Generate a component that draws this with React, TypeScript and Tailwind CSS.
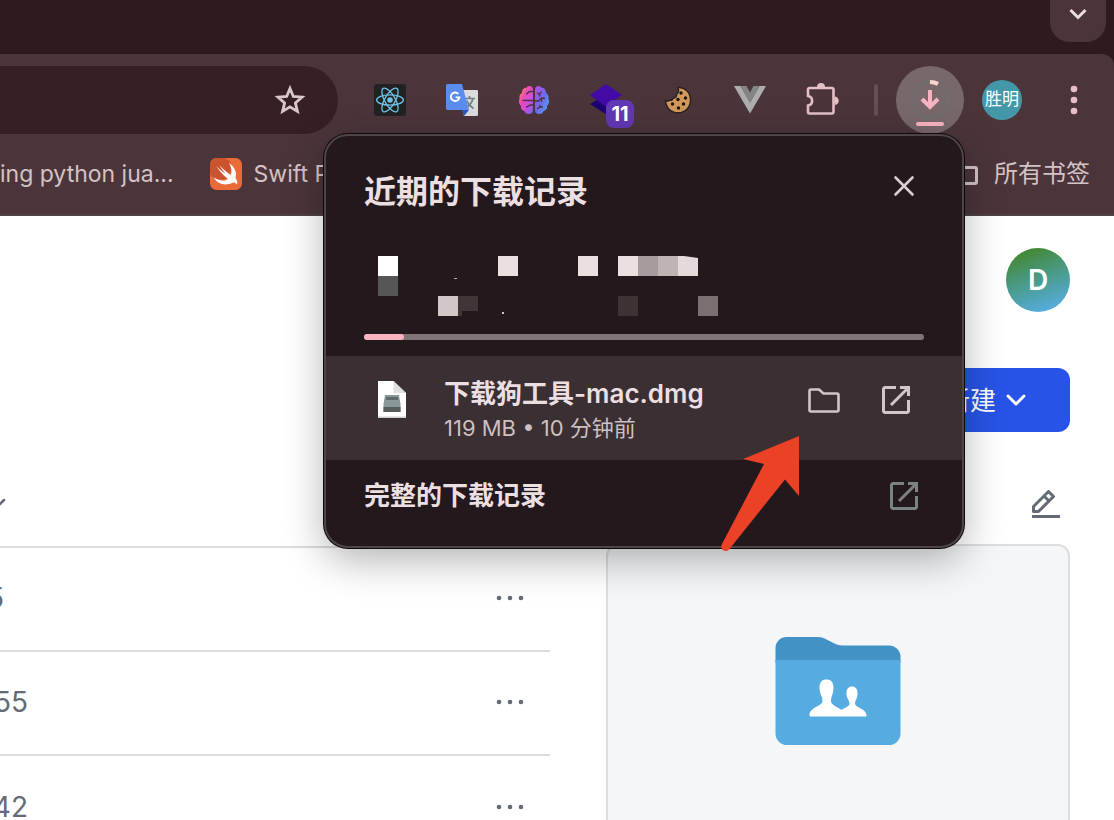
import { ReactNode } from "react"


const rows = [
    { id: 1, time: "5", width: "w-1" },
    { id: 2, time: "55", width: "w-7" },
    { id: 3, time: "42", width: "w-7" },
]

// redacted download entry, 20px blocks
const blocks = [
    { x: 14, y: 0, w: 20, h: 20, fill: "#ffffff" },
    { x: 14, y: 20, w: 20, h: 20, fill: "#565656" },
    { x: 134, y: 0, w: 20, h: 20, fill: "#ebdfe0" },
    { x: 214, y: 0, w: 20, h: 20, fill: "#ebdfe0" },
    { x: 254, y: 0, w: 20, h: 20, fill: "#ebdfe0" },
    { x: 274, y: 0, w: 20, h: 20, fill: "#a79c9d" },
    { x: 294, y: 0, w: 20, h: 20, fill: "#bfb3b4" },
    { x: 74, y: 40, w: 20, h: 20, fill: "#d2c6c7" },
    { x: 94, y: 40, w: 20, h: 15, fill: "#403637" },
    { x: 94, y: 55, w: 4, h: 5, fill: "#403637" },
    { x: 254, y: 40, w: 20, h: 20, fill: "#3d3234" },
    { x: 334, y: 40, w: 20, h: 20, fill: "#7b7071" },
    { x: 90, y: 22, w: 3, h: 1, fill: "#b5a9ab" },
    { x: 138, y: 56, w: 2, h: 2, fill: "#d2c6c7" },
]

function ReactIcon() {
    return (
        <svg viewBox="0 0 32 32" className="w-8 h-8">
            <rect width="32" height="32" rx="3" fill="#222222" />
            <g fill="none" stroke="#6fc3e6" strokeWidth="1.3">
                <ellipse cx="16" cy="16" rx="13.4" ry="5.2" />
                <ellipse cx="16" cy="16" rx="13.4" ry="5.2" transform="rotate(60 16 16)" />
                <ellipse cx="16" cy="16" rx="13.4" ry="5.2" transform="rotate(120 16 16)" />
            </g>
            <circle cx="16" cy="16" r="2.8" fill="#6fc3e6" />
        </svg>
    )
}

function TranslateIcon() {
    return (
        <svg viewBox="0 0 32 32" className="w-8 h-8">
            <path d="M12 6h19a1 1 0 0 1 1 1v23.500a1.500 1.500 0 0 1-1.500 1.500H18z" fill="#dcdcdc" />
            <path d="M16 26h7l-5 6z" fill="#2f56c0" />
            <path d="M18 14.500h11M23.500 12v2.500M27 14.500c-1 4-4 7.500-7.500 10M20.500 16.500c1.500 3.500 4 6 7 8" fill="none" stroke="#6f8088" strokeWidth="1.700" />
            <path d="M1.500 0H16l7 26H1.500A1.500 1.500 0 0 1 0 24.500v-23A1.500 1.500 0 0 1 1.500 0z" fill="#5b8def" />
            <path d="M12.300 9.800A4.300 4.300 0 1 0 13.400 13.400H9.600" fill="none" stroke="#ffffff" strokeWidth="1.900" />
        </svg>
    )
}

function BrainIcon() {
    return (
        <svg viewBox="0 0 32 32" className="w-8 h-8">
            <defs>
                <linearGradient id="brainLeft" x1="0" y1="0" x2="0.9" y2="1">
                    <stop offset="0" stopColor="#f9c03a" />
                    <stop offset="0.35" stopColor="#ee4fae" />
                    <stop offset="0.65" stopColor="#d44be0" />
                    <stop offset="1" stopColor="#7a63f0" />
                </linearGradient>
                <linearGradient id="brainRight" x1="0" y1="0" x2="1" y2="1">
                    <stop offset="0" stopColor="#c04be8" />
                    <stop offset="0.5" stopColor="#6c68f4" />
                    <stop offset="1" stopColor="#48b4f2" />
                </linearGradient>
            </defs>
            <path d="M11 2c2.500-.3 4 1.500 4 4v20c0 2.500-1.500 4-4 4-2.500 0-4-1-4.600-3C3.500 26.500 2.500 24 3 22 .8 20 .4 17 1.600 14.500 1 12 2 10 4 9 4 5.500 6 3.500 8.500 3.800 9 2.800 10 2.100 11 2z" fill="url(#brainLeft)" />
            <path d="M21 2c-2.500-.3-4 1.500-4 4v20c0 2.500 1.500 4 4 4 2.500 0 4-1 4.600-3 2.900-.5 3.900-3 3.400-5 2.200-2 2.600-5 1.400-7.500.6-2.500-.4-4.500-2.400-5.500 0-3.500-2-5.500-4.500-5.200-.5-1-1.500-1.700-2.500-1.800z" fill="url(#brainRight)" />
            <path d="M15 7.500h-3c-2 0-2 2.500-4 2.500M15 16.500H4.500M8 23c3 0 3-2 4.500-2H15M19 8.500l2.500 2 2-3M21.500 10.500v2M17 17h3.500l3-3 3.500.5M23.500 14v4M19 25l3-2v-2M22 23h3" fill="none" stroke="#4b353a" strokeWidth="1.300" />
        </svg>
    )
}

function StackIcon() {
    return (
        <div className="relative w-8 h-8">
            <svg viewBox="0 0 32 32" className="w-8 h-8">
                <path d="M0 20l16-9 16 9-16 10z" fill="#1d0070" />
                <path d="M0 11L16 0l16 11-16 12z" fill="#430aa5" />
            </svg>
            <span className="absolute left-4 top-4 w-7 h-7 rounded-lg bg-[#6338b4] text-white text-xl font-bold flex items-center justify-center">11</span>
        </div>
    )
}

function CookieIcon() {
    return (
        <svg viewBox="0 0 32 32" className="w-8 h-8">
            <path d="M16 3.500C23 3 28.500 8.500 28.500 16S23 28.800 16 28.800 4 24 3.500 16.500c2 .8 3.500.5 4.500-.5 1.500.5 3-.5 3.200-2 2.300 0 3.800-1.500 3.300-3.500 1.800-1.500 2.500-4 1.500-7z" fill="#d2985a" stroke="#2b2320" strokeWidth="1.500" />
            <g fill="#1c1310">
                <circle cx="19" cy="9" r="1.700" />
                <circle cx="23.500" cy="14" r="1.700" />
                <circle cx="16" cy="15.500" r="1.700" />
                <circle cx="10.500" cy="20" r="1.700" />
                <circle cx="21.500" cy="20" r="1.700" />
                <circle cx="16.500" cy="24" r="1.700" />
            </g>
        </svg>
    )
}

function VueIcon() {
    return (
        <svg viewBox="0 0 32 32" className="w-8 h-8">
            <path d="M0 2h6.500L16 18.500 25.500 2H32L16 29.500z" fill="#adadad" />
            <path d="M6.500 2h6L16 8.500 19.500 2h6L16 18.500z" fill="#858585" />
        </svg>
    )
}

function PuzzleIcon() {
    return (
        <svg viewBox="0 0 36 36" className="w-9 h-9">
            <path d="M5.500 6H28a1.500 1.500 0 0 1 1.500 1.500V30a1.500 1.500 0 0 1-1.500 1.500H5.500A1.500 1.500 0 0 1 4 30v-6.500a4.800 4.800 0 0 0 0-9.500V7.500A1.500 1.500 0 0 1 5.500 6z" fill="none" stroke="#e3bfc6" strokeWidth="2.600" />
            <path d="M13 5a4 4 0 0 1 8 0zM30.500 14.500a4 4 0 0 1 0 8.500z" fill="#e3bfc6" />
        </svg>
    )
}

function SwiftIcon() {
    return (
        <svg viewBox="0 0 32 32" className="w-8 h-8 shrink-0">
            <rect width="32" height="32" rx="6.500" fill="#ea6a38" />
            <path d="M6.500 0H15c5 3 7 6 7.500 10L16 21C9 23 3 21 0 16V6.500A6.500 6.500 0 0 1 6.500 0z" fill="#cb532d" />
            <path d="M19 5c6 4 8 10 6.500 15 2.200 3 2 5 1.500 6.500-2-2.500-4-2-5-1.500C14 28.500 6.500 25 4 19.500c5 3.500 10.500 4 14 1.500C13 17 9 12.500 6 8c3.500 3.500 7 6 9.500 7.500C13 13 11 10 9.500 7.500 13 11 17.500 15 21 17c1-4 .5-8-2-12z" fill="#ffffff" />
        </svg>
    )
}

function OpenIcon({ color }: { color: string }) {
    return (
        <svg viewBox="0 0 28 28" className={`w-7 h-7 ${color}`} fill="none" stroke="currentColor" strokeWidth="3">
            <path d="M14 1.500H3A1.500 1.500 0 0 0 1.500 3v22A1.500 1.500 0 0 0 3 26.500h22a1.500 1.500 0 0 0 1.500-1.500V14" />
            <path d="M18 1.500h8.500V10M26 2L9 19" />
        </svg>
    )
}

function Dots() {
    return (
        <svg viewBox="0 0 28 6" className="w-7 h-1.5" fill="#646b75">
            <circle cx="3" cy="3" r="2.300" />
            <circle cx="14" cy="3" r="2.300" />
            <circle cx="25" cy="3" r="2.300" />
        </svg>
    )
}

function Extension({ label, children }: { label: string, children: ReactNode }) {
    return (
        <button aria-label={label} className="w-[72px] h-[68px] flex items-center justify-center">
            {children}
        </button>
    )
}

function Toolbar() {
    return (
        <div className="flex items-center pt-3">
            <div className="flex-1 min-w-0 h-[68px] rounded-r-full bg-[#362024] flex items-center pr-8">
                <input type="text" aria-label="地址栏" className="flex-1 min-w-0 h-full bg-transparent outline-none text-2xl text-[#ecdfe1]" />
                <button aria-label="收藏">
                    <svg viewBox="0 0 32 32" className="w-8 h-8" fill="none" stroke="#d8c8cb" strokeWidth="2.800">
                        <path d="M16 4.500l3.300 8 8.700.7-6.600 5.700 2 8.500L16 22.900l-7.400 4.500 2-8.500L4 13.200l8.700-.7z" />
                    </svg>
                </button>
            </div>
            <div className="flex items-center shrink-0 pl-4">
                <Extension label="React"><ReactIcon /></Extension>
                <Extension label="Google 翻译"><TranslateIcon /></Extension>
                <Extension label="Brain"><BrainIcon /></Extension>
                <Extension label="Stack"><StackIcon /></Extension>
                <Extension label="Cookie"><CookieIcon /></Extension>
                <Extension label="Vue"><VueIcon /></Extension>
                <Extension label="扩展程序"><PuzzleIcon /></Extension>
            </div>
            <div className="ml-4 w-1 h-8 shrink-0 rounded-full bg-[#674e54]" />
            <button aria-label="下载" className="ml-[18px] w-[68px] h-[68px] shrink-0 rounded-full bg-[#78676b]">
                <svg viewBox="0 0 68 68" className="w-full h-full" fill="none">
                    <circle cx="34" cy="34" r="18" stroke="#726c6b" strokeWidth="4" />
                    <path d="M34 16a18 18 0 0 1 8 1.900" stroke="#fcd6cc" strokeWidth="4" />
                    <path d="M34 24v17M26 33l8 8 8-8" stroke="#f8b2c0" strokeWidth="4" />
                    <path d="M22 58h24" stroke="#f8b2c0" strokeWidth="4" strokeLinecap="round" />
                </svg>
            </button>
            <button className="ml-[18px] w-10 h-10 shrink-0 rounded-full bg-[#4497a9] text-white text-[17px] whitespace-nowrap flex items-center justify-center">胜明</button>
            <button aria-label="菜单" className="ml-8 mr-5 w-10 h-10 shrink-0 flex items-center justify-center">
                <svg viewBox="0 0 8 32" className="w-2 h-8" fill="#e6c0c8">
                    <circle cx="4" cy="5" r="3.300" />
                    <circle cx="4" cy="16" r="3.300" />
                    <circle cx="4" cy="27" r="3.300" />
                </svg>
            </button>
        </div>
    )
}

function Bookmarks() {
    return (
        <nav className="flex items-center justify-between h-20 pr-6 text-2xl text-[#d3c3c6] whitespace-nowrap">
            <div className="flex items-center gap-9 text-[23px]">
                <a href="#python">ing python jua...</a>
                <a href="#swift" className="flex items-center gap-3"><SwiftIcon />Swift P</a>
            </div>
            <a href="#all" className="flex items-center gap-4">
                <svg viewBox="0 0 32 24" className="w-8 h-6" fill="none" stroke="currentColor" strokeWidth="3">
                    <path d="M1.500 20V3.500h10l3 2H29A1.500 1.500 0 0 1 30.500 7v13a1.500 1.500 0 0 1-1.500 1.500H3A1.500 1.500 0 0 1 1.500 20z" />
                </svg>
                所有书签
            </a>
        </nav>
    )
}

function Downloads() {
    return (
        <section className="absolute right-[150px] top-[134px] w-[640px] rounded-3xl border-2 border-[#4d4547] bg-[#23191c] text-[#ecdfe1] shadow-[0_0_0_1px_#0d0809,0_12px_40px_rgba(0,0,0,0.3)]">
            <div className="px-[38px]">
                <div className="flex items-center justify-between h-[108px] pr-2">
                    <h2 className="pt-1 text-[32px] font-semibold leading-10">近期的下载记录</h2>
                    <button aria-label="关闭" className="pb-2">
                        <svg viewBox="0 0 24 24" className="w-6 h-6" fill="none" stroke="#dccdd0" strokeWidth="2.600" strokeLinecap="round">
                            <path d="M3.500 3.500l17 17M20.500 3.500l-17 17" />
                        </svg>
                    </button>
                </div>
                <svg viewBox="0 0 560 78" className="mt-3 w-[560px] h-[78px]">
                    {blocks.map((b) => (
                        <rect key={`${b.x}-${b.y}`} x={b.x} y={b.y} width={b.w} height={b.h} fill={b.fill} />
                    ))}
                    <path d="M314 0h6l14 2v18h-20z" fill="#e5d9da" />
                </svg>
                <div className="h-1.5 mb-4 rounded-full bg-[#7f7476]">
                    <div className="h-full w-10 rounded-full bg-[#f8b2c0]" />
                </div>
            </div>
            <div className="flex items-start h-[104px] pt-5 px-[52px] bg-[#3a2f32]">
                <svg viewBox="0 0 28 40" className="mt-1 w-7 h-10">
                    <path d="M0 1h15.500L28 13v25H0z" fill="#ffffff" />
                    <path d="M15.500 1v12H28z" fill="#dfdfdf" />
                    <path d="M0 36.500h28V38H0z" fill="#cfcfcf" />
                    <path d="M7 15h14l1.500 9v8h-17v-8z" fill="#8b9899" />
                    <path d="M8 17h12v3H8z" fill="#5d6a6c" />
                    <path d="M5.500 27h17v5h-17z" fill="#565b5c" />
                </svg>
                <div className="flex-1 pl-[38px]">
                    <p className="text-[26px] leading-9 font-semibold">下载狗工具-mac.dmg</p>
                    <p className="text-[22px] leading-8 text-[#cdbfc2]">119 MB • 10 分钟前</p>
                </div>
                <div className="flex items-center h-12 gap-[42px]">
                    <button aria-label="在文件夹中显示">
                        <svg viewBox="0 0 32 28" className="w-8 h-7" fill="none" stroke="#d3c5c8" strokeWidth="2.600">
                            <path d="M3 3.500h8l4.500 4H29A1.500 1.500 0 0 1 30.500 9v15a1.500 1.500 0 0 1-1.500 1.500H3A1.500 1.500 0 0 1 1.500 24V5A1.500 1.500 0 0 1 3 3.500z" />
                        </svg>
                    </button>
                    <button aria-label="打开文件"><OpenIcon color="text-[#d3c5c8]" /></button>
                </div>
            </div>
            <a href="#downloads" className="flex items-center justify-between h-[86px] pl-[38px] pr-11 pb-3.5">
                <span className="text-[26px] leading-9 font-semibold">完整的下载记录</span>
                <OpenIcon color="text-[#7d8285]" />
            </a>
        </section>
    )
}

function SharedFolder() {
    return (
        <svg viewBox="0 0 126 110" className="w-[126px] h-[110px]">
            <path d="M11.500 1h31C52 1 58 9.500 68 9.500h46A11.500 11.500 0 0 1 125.500 21v6H.5V12A11 11 0 0 1 11.500 1z" fill="#4392c5" />
            <path d="M.5 24h125v73.500A11.500 11.500 0 0 1 114 109H12A11.500 11.500 0 0 1 .5 97.500z" fill="#56abe0" />
            <path d="M51.500 43.500c4.500 0 7 2.500 7 8.500s-2.500 8-2.500 13c0 4 6 5.500 10.500 9 5-3.500 8-3.500 8-6.500 0-3-3-5-3-10 0-4.500 2-7 5.500-7s5.500 2.500 5.500 7c0 5-2.500 7-2.500 10 0 4 11.500 5.500 11.500 11.500 0 1-.5 1.500-1.500 1.500H36c-1 0-1.500-.5-1.500-1.500 0-7.500 13-9 13-14 0-5-3-7-3-13s2.500-8.500 7-8.500z" fill="#ffffff" />
        </svg>
    )
}

export default function App() {
    return (
        <div className="relative h-screen overflow-hidden flex flex-col bg-[#2e1b1f] font-[Inter,'Noto_Sans_CJK_SC',sans-serif]">
            <div className="h-[54px] shrink-0 flex justify-end pr-2">
                <button aria-label="搜索标签页" className="w-14 h-[42px] rounded-b-[20px] bg-[#4b353a] flex justify-center pt-2">
                    <svg viewBox="0 0 18 12" className="w-[18px] h-3" fill="none" stroke="#ecdfe1" strokeWidth="3">
                        <path d="M1.500 2L9 9.500 16.500 2" />
                    </svg>
                </button>
            </div>
            <header className="h-[162px] shrink-0 rounded-tr-xl bg-[#4b353a] border-b-2 border-[#4f4245]">
                <Toolbar />
                <Bookmarks />
            </header>
            <main className="flex-1 min-h-0 flex flex-col pt-8 bg-white">
                <div className="flex flex-col items-end gap-14 pr-11">
                    <button className="w-16 h-16 rounded-full bg-linear-160 from-[#45893a] from-15% to-[#57acdf] to-90% text-white text-[28px] font-semibold flex items-center justify-center">D</button>
                    <button className="h-16 pl-12 pr-11 rounded-xl bg-[#2754e6] text-white text-[26px] flex items-center gap-2.5">
                        新建
                        <svg viewBox="0 0 20 12" className="w-5 h-3" fill="none" stroke="currentColor" strokeWidth="3" strokeLinecap="round" strokeLinejoin="round">
                            <path d="M2 2l8 8 8-8" />
                        </svg>
                    </button>
                </div>
                <div className="flex items-center justify-between h-20 mt-8 pr-[53px] text-[#646b75]">
                    <button aria-label="排序" className="w-1.5 flex justify-end">
                        <svg viewBox="0 0 20 12" className="w-5 h-3 shrink-0" fill="none" stroke="currentColor" strokeWidth="2.500" strokeLinecap="round">
                            <path d="M2 2l8 8 8-8" />
                        </svg>
                    </button>
                    <button aria-label="编辑">
                        <svg viewBox="0 0 30 30" className="w-[30px] h-[30px]" fill="none" stroke="currentColor" strokeWidth="3">
                            <path d="M2.500 22.500v-5L17.500 2.500l5 5-15 15zM13 7l5 5" strokeLinejoin="round" />
                            <path d="M1 27.500h28" strokeWidth="3" />
                        </svg>
                    </button>
                </div>
                <div className="flex flex-1 min-h-0 gap-14 pr-11">
                    <div className="flex-1 pt-0.5">
                        <table className="w-full border-collapse">
                            <tbody>
                                {rows.map((row) => (
                                    <tr key={row.id} className="h-[104px] border-t-2 border-[#dcdcde]">
                                        <td className="p-0 pb-0.5 text-[28px] leading-9 text-[#646b75]">
                                            <span className={`${row.width} flex justify-end`}>{row.time}</span>
                                        </td>
                                        <td className="w-20 p-0 pb-0.5">
                                            <button aria-label="更多" className="w-20 h-16 flex items-center justify-center"><Dots /></button>
                                        </td>
                                    </tr>
                                ))}
                            </tbody>
                        </table>
                    </div>
                    <aside className="w-[464px] flex justify-center pt-[90px] rounded-t-xl border-2 border-b-0 border-[#dcdee1] bg-[#f4f6f8]">
                        <SharedFolder />
                    </aside>
                </div>
            </main>
            <Downloads />
            <svg viewBox="0 0 80 116" className="absolute right-[314px] top-[436px] w-20 h-[116px] pointer-events-none">
                <path d="M79 0L23 23l21 5L2 108a4.500 4.500 0 0 0 7.500 5L65 43.500 79 60z" fill="#eb4127" />
            </svg>
        </div>
    )
}
//
